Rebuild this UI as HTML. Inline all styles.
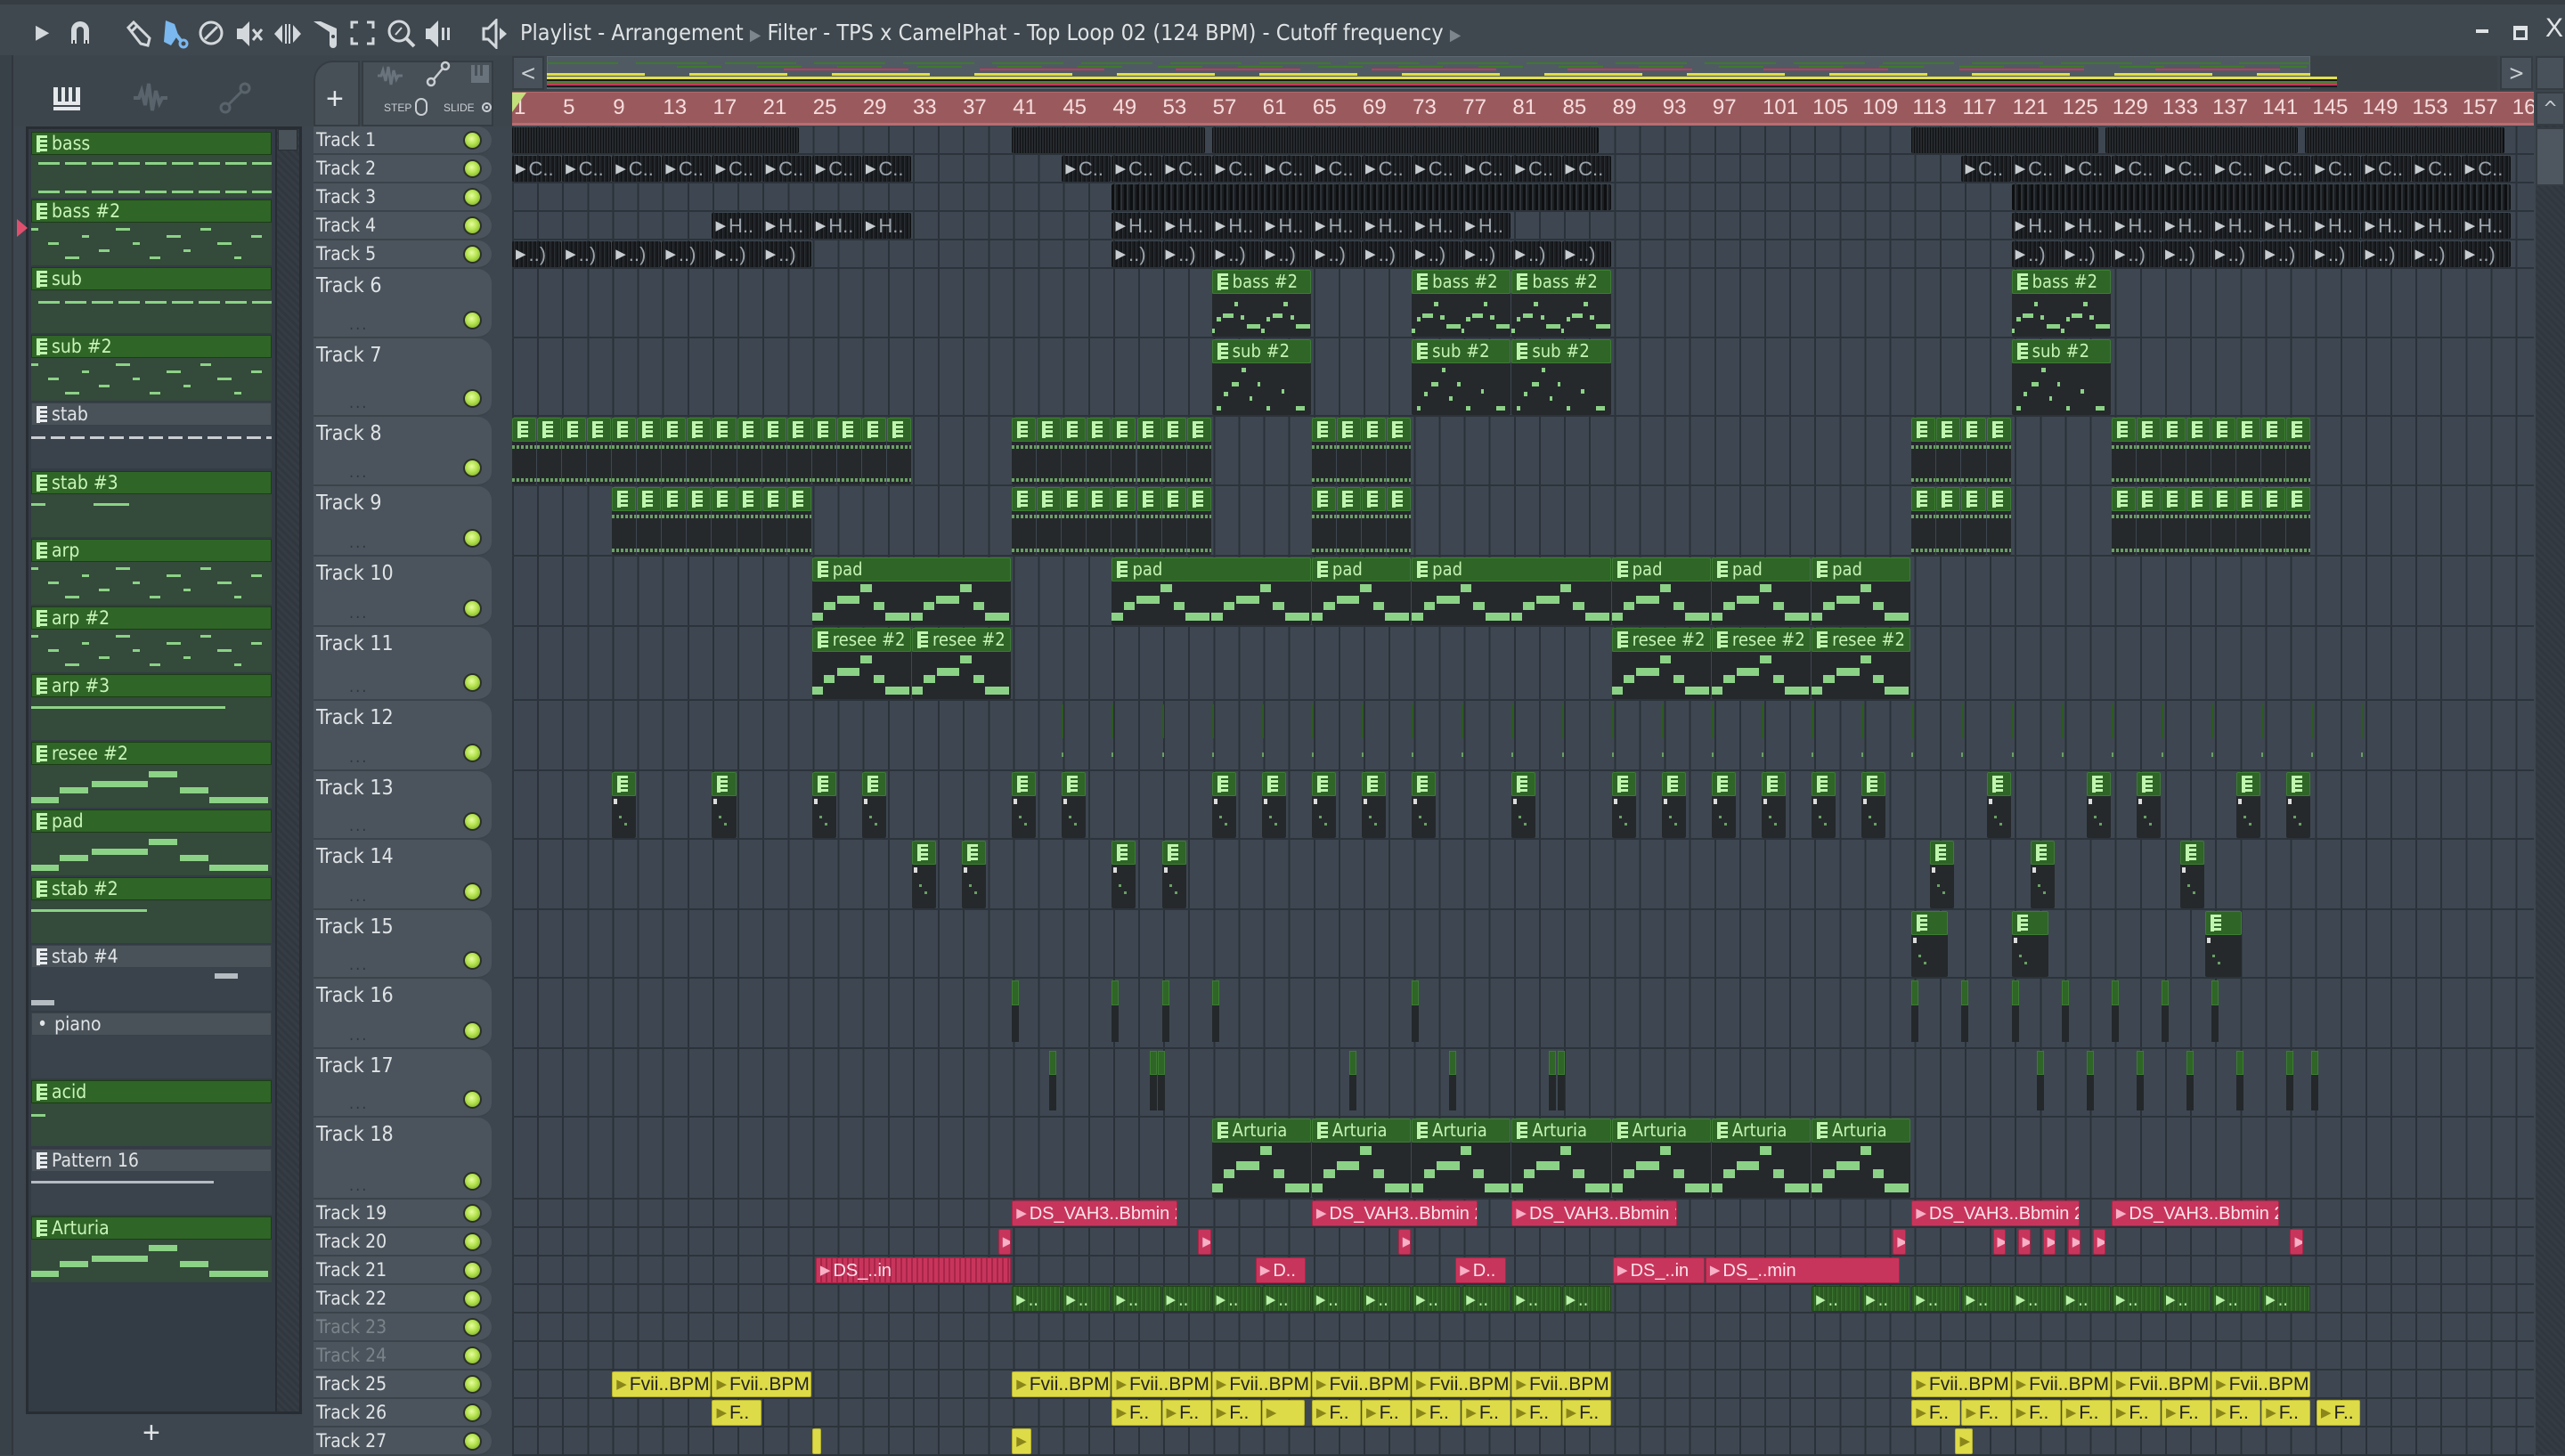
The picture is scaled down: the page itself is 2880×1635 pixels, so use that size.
<!DOCTYPE html>
<html><head><meta charset="utf-8">
<style>
*{box-sizing:border-box;margin:0;padding:0}
body{width:2880px;height:1634px;overflow:hidden;background:#3d464e;font-family:"DejaVu Sans Condensed","DejaVu Sans","Liberation Sans",sans-serif;position:relative}
.a{position:absolute}
#top{left:0;top:0;width:2880px;height:62px;background:#3f484e;border-top:5px solid #363d43}
.ico{position:absolute;top:14px;height:36px;color:#d3d8dc;font-size:30px;line-height:36px}
#title{left:584px;top:14px;font-size:25px;color:#dfe3e6;white-space:nowrap;line-height:36px}
#ruler{left:575px;top:103px;width:2270px;height:38px;background:#9a5a5d;border-bottom:3px solid #b86e72;border-top:1px solid #b06a6d;overflow:hidden}
#ruler span{position:absolute;top:3px;font-family:"Liberation Sans Narrow","Liberation Sans",sans-serif;font-size:24px;color:#f6dcdc}
#g{left:575px;top:142px;width:2270px;height:1492px;background-color:#3e4751;background-image:repeating-linear-gradient(90deg,#2a3138 0 2px,transparent 2px 28.12px)}
.row{position:absolute;left:0;width:2270px;border-bottom:2px solid #2c333a}
.th{position:absolute;left:352px;width:200px;background:#4b545c;border-radius:0 16px 16px 0;border-bottom:2px solid #3b434a;color:#dfe3e6}
.th b{position:absolute;left:3px;font-weight:normal;white-space:nowrap}
.led{position:absolute;left:168px;width:21px;height:21px;border-radius:50%;background:radial-gradient(circle at 45% 40%,#e6fca0 0,#b3e24d 45%,#6d9a23 100%);border:2px solid #2b3129}
.dots{position:absolute;left:40px;color:#2f363c;font-size:18px;letter-spacing:2px}
.c{position:absolute;overflow:hidden;white-space:nowrap;border-radius:2px}
.dk{background:#1c1f22;background-image:repeating-linear-gradient(90deg,#141619 0 2px,#2a2e33 2px 3px,#1c1f22 3px 5px);border-right:1px solid #0e1012;color:#9aa3ab;font-family:"Liberation Sans Narrow","Liberation Sans",sans-serif;font-size:22px;line-height:30px}
.wf1{background:#1a1c1f;background-image:repeating-linear-gradient(90deg,#0f1113 0 1px,#26292d 1px 3px)}
.wf3{background:#1b1e21;background-image:repeating-linear-gradient(90deg,#0d0f11 0 3px,#2d3237 3px 5px,#1b1e21 5px 7px)}
.ar{display:inline-block;color:#c7ccd0;font-size:15px;margin:0 3px 0 4px;vertical-align:top}
.ph{position:absolute;left:0;top:0;right:0;height:27px;background:#2f6527;border:1px solid #3c7d32;color:#c4f4b4;font-size:20px;line-height:25px;border-radius:2px}
.pb{position:absolute;left:0;top:27px;right:0;bottom:0;background:#25292c}
.pi{display:inline-block;width:12px;height:19px;margin:3px 5px 0 5px;vertical-align:top;background:repeating-linear-gradient(180deg,#bff5ae 0 3px,#2f6527 3px 5px);border-left:4px solid #bff5ae}
.n{position:absolute;height:9px;background:#8cd286}
.red{background:#c8355c;border:1px solid #a82548;color:#fbe3ea;font-family:"Liberation Sans Narrow","Liberation Sans",sans-serif;font-size:20px;line-height:28px}
.ga{background:#2d5e23;background-image:repeating-linear-gradient(90deg,#2a5820 0 2px,#3a7330 2px 3px,#2d5e23 3px 5px);border:1px solid #1f4318;color:#b9f2a9;font-size:20px;line-height:28px}
.yel{background:#dedb48;border:1px solid #b5b22e;color:#222;font-family:"Liberation Sans Narrow","Liberation Sans",sans-serif;font-size:21px;line-height:28px}
.yel .ar{color:#8a861a}
.red .ar{color:#f7b0c6}
.ga .ar{color:#b9f2a9}
.mk{position:absolute;width:8px;background:#24282b}
.mk i{position:absolute;left:0;top:0;width:8px;height:40%;background:#2f6527;border:1px solid #3c7d32}
#lp{left:29px;top:142px;width:310px;height:1446px;background:#333b45;border:3px solid #272d33}
.it{position:absolute;left:4px;width:270px;height:74px}
.ih{position:absolute;left:0;top:0;width:270px;height:26px;font-size:21px;line-height:25px;color:#c8f5b8;border:1px solid #1c3d16;background:#2f6527;white-space:nowrap}
.ib{position:absolute;left:0;top:26px;width:270px;height:48px;background:#344a3a}
.gr .ih{background:#4a5259;color:#e0e4e7;border-color:#3a4148}
.gr .ib{background:#3a424b}
.gr .pi{background:repeating-linear-gradient(180deg,#e8ecef 0 3px,#4a5259 3px 5px);border-left-color:#e8ecef}
</style></head><body>
<div class="a" style="left:0;top:0;width:15px;height:1634px;background:#394148;border-right:2px solid #30373d"></div>
<div id="top" class="a">
<div class="ico" style="left:40px;font-size:22px">▶</div>
<svg class="a" style="left:76px;top:16px" width="28" height="30" viewBox="0 0 28 30"><path d="M4 28V13a10 10 0 0 1 20 0v15h-6V13a4 4 0 0 0-8 0v15z" fill="#d3d8dc"/><rect x="6" y="24" width="2" height="4" fill="#333"/><rect x="20" y="24" width="2" height="4" fill="#333"/></svg>
<svg class="a" style="left:140px;top:16px" width="32" height="32" viewBox="0 0 32 32"><path d="M4 10l6-6 18 18-2 8-8-2z" fill="none" stroke="#d3d8dc" stroke-width="3"/><path d="M8 14l6-6" stroke="#d3d8dc" stroke-width="3"/></svg>
<svg class="a" style="left:180px;top:14px" width="34" height="36" viewBox="0 0 34 36"><path d="M6 4l10 4 4 12-8 12-8-4z" fill="#7ab8ef"/><circle cx="26" cy="30" r="4" fill="none" stroke="#7ab8ef" stroke-width="3"/><path d="M18 20l6 8" stroke="#7ab8ef" stroke-width="4"/></svg>
<svg class="a" style="left:222px;top:17px" width="30" height="30" viewBox="0 0 30 30"><circle cx="15" cy="15" r="12" fill="none" stroke="#d3d8dc" stroke-width="3"/><path d="M8 22L22 8" stroke="#d3d8dc" stroke-width="3"/></svg>
<svg class="a" style="left:264px;top:16px" width="34" height="34" viewBox="0 0 34 34"><path d="M2 11h6l8-8v28l-8-8H2z" fill="#d3d8dc"/><path d="M20 12l10 12M30 12L20 24" stroke="#d3d8dc" stroke-width="3"/></svg>
<svg class="a" style="left:306px;top:18px" width="34" height="30" viewBox="0 0 34 30"><path d="M2 15l9-10v20zM32 15l-9-10v20z" fill="#d3d8dc"/><rect x="14" y="4" width="2" height="22" fill="#d3d8dc"/><rect x="18" y="4" width="2" height="22" fill="#d3d8dc"/></svg>
<svg class="a" style="left:350px;top:16px" width="32" height="34" viewBox="0 0 32 34"><path d="M2 3l16 16M2 3h8l18 8v18a4 4 0 0 1-8 0V15z" fill="#d3d8dc"/><circle cx="24" cy="20" r="2" fill="#3f484e"/></svg>
<svg class="a" style="left:392px;top:17px" width="30" height="30" viewBox="0 0 30 30"><path d="M3 10V3h7M20 3h7v7M27 20v7h-7M10 27H3v-7" fill="none" stroke="#d3d8dc" stroke-width="3"/></svg>
<svg class="a" style="left:434px;top:16px" width="34" height="34" viewBox="0 0 34 34"><circle cx="14" cy="14" r="11" fill="none" stroke="#d3d8dc" stroke-width="3"/><path d="M22 22l9 9" stroke="#d3d8dc" stroke-width="4"/><path d="M10 18l7-8" stroke="#d3d8dc" stroke-width="2"/></svg>
<svg class="a" style="left:476px;top:16px" width="32" height="34" viewBox="0 0 32 34"><path d="M2 11h5l9-9v30l-9-9H2z" fill="#d3d8dc"/><rect x="20" y="10" width="3" height="14" fill="#d3d8dc"/><rect x="26" y="10" width="3" height="14" fill="#d3d8dc"/></svg>
<svg class="a" style="left:540px;top:16px" width="32" height="34" viewBox="0 0 32 34"><path d="M3 11h5l9-9v30l-9-9H3z" fill="none" stroke="#d3d8dc" stroke-width="3"/><path d="M21 10l8 7-8 7z" fill="#d3d8dc"/></svg>
<div id="title" class="a">Playlist - Arrangement <span style="color:#7d868d;font-size:18px">▶</span> Filter - TPS x CamelPhat - Top Loop 02 (124 BPM) - Cutoff frequency <span style="color:#7d868d;font-size:18px">▶</span></div>
<div class="a" style="left:2780px;top:28px;width:14px;height:4px;background:#dfe3e6"></div>
<div class="a" style="left:2822px;top:24px;width:16px;height:16px;border:3px solid #dfe3e6;border-top-width:5px"></div>
<div class="a" style="left:2858px;top:10px;font-size:30px;color:#dfe3e6;font-family:'Liberation Sans',sans-serif">X</div>
</div>
<div class="a" style="left:15px;top:62px;width:2865px;height:80px;background:#3d454c"></div>
<svg class="a" style="left:58px;top:96px" width="34" height="30" viewBox="0 0 34 30"><rect x="2" y="2" width="30" height="26" fill="#e4e8eb"/><rect x="7" y="2" width="4" height="16" fill="#3d454c"/><rect x="15" y="2" width="4" height="16" fill="#3d454c"/><rect x="23" y="2" width="4" height="16" fill="#3d454c"/><rect x="2" y="22" width="30" height="2" fill="#3d454c"/></svg>
<svg class="a" style="left:148px;top:92px" width="40" height="36" viewBox="0 0 40 36"><path d="M2 18h6l3-8 4 16 4-24 4 30 4-22 4 14 3-6h6" fill="none" stroke="#59636b" stroke-width="4"/></svg>
<svg class="a" style="left:246px;top:92px" width="36" height="36" viewBox="0 0 36 36"><circle cx="7" cy="29" r="5" fill="none" stroke="#59636b" stroke-width="3"/><circle cx="29" cy="7" r="5" fill="none" stroke="#59636b" stroke-width="3"/><path d="M11 25L25 11" stroke="#59636b" stroke-width="3"/></svg>
<div class="a" style="left:352px;top:68px;width:52px;height:74px;background:#474f57;border-radius:22px 0 0 0;border:2px solid #353c42"></div>
<div class="a" style="left:366px;top:92px;font-size:34px;color:#e3e7ea;font-family:'Liberation Sans',sans-serif">+</div>
<div class="a" style="left:406px;top:68px;width:148px;height:74px;background:#474f57;border:2px solid #353c42"></div>
<svg class="a" style="left:422px;top:72px" width="30" height="26" viewBox="0 0 30 26"><path d="M2 13h4l2-6 3 12 3-16 3 20 3-16 3 10 2-4h5" fill="none" stroke="#69737b" stroke-width="3"/></svg>
<svg class="a" style="left:478px;top:68px" width="28" height="30" viewBox="0 0 28 30"><circle cx="6" cy="24" r="4" fill="none" stroke="#c9ced2" stroke-width="2.5"/><circle cx="22" cy="6" r="4" fill="none" stroke="#c9ced2" stroke-width="2.5"/><path d="M9 21L19 9" stroke="#c9ced2" stroke-width="2.5"/></svg>
<svg class="a" style="left:528px;top:72px" width="22" height="22" viewBox="0 0 22 22"><rect x="1" y="1" width="20" height="20" fill="#69737b"/><rect x="5" y="1" width="3" height="12" fill="#474f57"/><rect x="11" y="1" width="3" height="12" fill="#474f57"/></svg>
<div class="a" style="left:431px;top:114px;font-size:12px;color:#c9ced2;font-family:'Liberation Sans Narrow','Liberation Sans',sans-serif">STEP</div>
<div class="a" style="left:466px;top:110px;width:14px;height:20px;border:2px solid #c9ced2;border-radius:7px"></div>
<div class="a" style="left:498px;top:114px;font-size:12px;color:#c9ced2;font-family:'Liberation Sans Narrow','Liberation Sans',sans-serif">SLIDE</div>
<div class="a" style="left:541px;top:115px;width:11px;height:11px;border:2px solid #c9ced2;border-radius:50%;background:radial-gradient(#c9ced2 30%,transparent 35%)"></div>
<div class="a" style="left:575px;top:63px;width:36px;height:38px;background:#48515a;border:2px solid #353c42;color:#c9ced2;font-size:24px;text-align:center;line-height:34px">&lt;</div>
<div class="a" style="left:2807px;top:63px;width:37px;height:38px;background:#48515a;border:2px solid #353c42;color:#c9ced2;font-size:24px;text-align:center;line-height:34px">&gt;</div>
<div class="a" style="left:2847px;top:63px;width:33px;height:38px;background:#48515a;border:2px solid #353c42"></div>
<div class="a" style="left:614px;top:63px;width:2190px;height:38px;background:#3a4248"></div>
<div class="a" style="left:614px;top:63px;width:1980px;height:37px;background:#505a63;border:1px solid #5d6770"></div>
<div class="a" style="left:614px;top:70px;width:1980px;height:2px;background:repeating-linear-gradient(90deg,#3d7a2d 0 80px,transparent 80px 100px)"></div>
<div class="a" style="left:760px;top:74px;width:1830px;height:2px;background:repeating-linear-gradient(90deg,#3d7a2d 0 50px,transparent 50px 90px)"></div>
<div class="a" style="left:880px;top:77px;width:1700px;height:2px;background:repeating-linear-gradient(90deg,#c9355c 0 140px,transparent 140px 220px)"></div>
<div class="a" style="left:614px;top:82px;width:1980px;height:3px;background:repeating-linear-gradient(90deg,#dede4a 0 110px,transparent 110px 160px)"></div>
<div class="a" style="left:614px;top:86px;width:2010px;height:3px;background:#e3e14a"></div>
<div class="a" style="left:614px;top:89px;width:2010px;height:2px;background:#1a1c1e"></div>
<div class="a" style="left:614px;top:91px;width:2010px;height:2px;background:#3f8a2f"></div>
<div class="a" style="left:614px;top:93px;width:2010px;height:3px;background:#c9355c"></div>
<div class="a" style="left:614px;top:96px;width:2010px;height:2px;background:#1a1c1e"></div>
<div id="ruler" class="a"></div>
<div class="a" style="left:575px;top:104px;width:0;height:0;border-left:16px solid #c2e07a;border-bottom:22px solid transparent"></div>
<div class="a" style="left:2847px;top:103px;width:33px;height:1531px;background:repeating-linear-gradient(45deg,#30373e 0 3px,#343b42 3px 6px)"></div>
<div class="a" style="left:2847px;top:103px;width:33px;height:38px;background:#48515a;border:2px solid #353c42;color:#c9ced2;font-size:22px;text-align:center;line-height:36px">^</div>
<div class="a" style="left:2847px;top:143px;width:33px;height:66px;background:#4e575f;border:2px solid #353c42"></div>
<div id="lp" class="a"></div>
<div class="a" style="left:309px;top:145px;width:27px;height:1440px;background:repeating-linear-gradient(45deg,#30373e 0 3px,#353c43 3px 6px);border-left:2px solid #272d33"></div>
<div class="a" style="left:312px;top:145px;width:22px;height:24px;background:#4a5259;border:1px solid #2a3036"></div>
<div class="a" style="left:160px;top:1590px;font-size:34px;color:#dfe3e6;font-family:'Liberation Sans',sans-serif">+</div>
<div id="g" class="a"></div>
<div id="th"></div>
<script>
const B=14.03;
const H=[32,32,32,32,32,78,88,78,79,79,83,79,77,79,77,79,77,92,32,32,32,32,32,32,32,32,32];
const T=[];let yy=0;for(const h of H){T.push(yy);yy+=h;}
const g=document.getElementById('g');let s='';
for(let i=0;i<H.length;i++) s+=`<div class="row" style="top:${T[i]}px;height:${H[i]}px"></div>`;
let th='';
for(let i=0;i<H.length;i++){const tall=H[i]>40;const dim=(i==22||i==23);
th+=`<div class="th" style="top:${142+T[i]}px;height:${H[i]}px"><b style="top:${tall?6:3}px;font-size:${tall?23:21}px;${dim?'color:#7b838a':''}">Track ${i+1}</b><div class="led" style="top:${tall?H[i]-31:5}px"></div>${tall?`<div class="dots" style="top:${H[i]-26}px">...</div>`:''}</div>`;}
document.getElementById('th').innerHTML=th;
let r='';for(let n=1;n<=161;n+=4){r+=`<span style="left:${(n-1)*B+(n==1?2:1)}px">${n}</span>`;}
document.getElementById('ruler').innerHTML=r;
function X(b){return (b-1)*B}
function box(t,b1,b2,cls,inner,extra){const x=X(b1),w=(b2-b1)*B-1,y=T[t-1]+1,h=H[t-1]-3;s+=`<div class="c ${cls}" style="left:${x}px;top:${y}px;width:${w}px;height:${h}px;${extra||''}">${inner||''}</div>`;}
function seq(t,b1,b2,len,cls,lab){for(let b=b1;b<b2-0.01;b+=len){box(t,b,Math.min(b+len,b2),cls,lab);}}
const A=t=>`<span class="ar">▶</span>${t}`;
[[1,24],[41,56.5],[57,88],[113,128],[128.5,144],[144.5,160.5]].forEach(a=>box(1,a[0],a[1],'dk wf1'));
seq(2,1,33,4,'dk',A('C..'));seq(2,45,89,4,'dk',A('C..'));seq(2,117,161,4,'dk',A('C..'));
box(3,49,89,'dk wf3');box(3,121,161,'dk wf3');
seq(4,17,33,4,'dk',A('H..'));seq(4,49,81,4,'dk',A('H..'));seq(4,121,161,4,'dk',A('H..'));
seq(5,1,25,4,'dk',A('..)'));seq(5,49,89,4,'dk',A('..)'));seq(5,121,161,4,'dk',A('..)'));
const PAD=[[0,.12,.88],[.12,.24,.58],[.25,.49,.4],[.49,.61,.08],[.62,.74,.58],[.74,.99,.88]];
const BASS=[[0,.08,.9],[.1,.2,.6],[.22,.45,.5],[.45,.55,.2],[.58,.68,.55],[.7,1,.8]];
const SUB=[[.05,.1,.9],[.12,.17,.6],[.2,.28,.4],[.3,.35,.1],[.38,.42,.7],[.46,.5,.4],[.55,.6,.9],[.7,.74,.55],[.85,.95,.9]];
function pat(t,b1,b2,lab,motif,rep,nh){const w=(b2-b1)*B-1;const bh=H[t-1]-3-27;let n='';
 for(let r=0;r<rep;r++){const o=r*w/rep,ww=w/rep;for(const m of motif){n+=`<div class="n" style="left:${o+m[0]*ww}px;width:${Math.max(3,(m[1]-m[0])*ww-1)}px;top:${m[2]*(bh-(nh||9))}px;height:${nh||9}px"></div>`;}}
 box(t,b1,b2,'',`<div class="ph"><i class="pi"></i>${lab}</div><div class="pb">${n}</div>`);}
[57,73,81,121].forEach(b=>pat(6,b,b+8,'bass #2',BASS,2,5));
[57,73,81,121].forEach(b=>pat(7,b,b+8,'sub #2',SUB,1,5));
function sp(t,b1,b2,len,dots){for(let b=b1;b<b2-0.01;b+=len){box(t,b,b+len,'',`<div class="ph" style="padding:0"><i class="pi" style="margin-left:5px"></i></div><div class="pb">${dots?'<div class="n" style="left:0;right:0;top:4px;height:4px;background:repeating-linear-gradient(90deg,#6aa064 0 3px,transparent 3px 5px)"></div><div class="n" style="left:0;right:0;bottom:3px;top:auto;height:4px;background:repeating-linear-gradient(90deg,#6aa064 0 3px,transparent 3px 5px)"></div>':'<div class="n" style="left:2px;top:3px;width:4px;height:6px;background:#ddd"></div><div class="n" style="left:8px;top:22px;width:3px;height:3px;background:#6aa064"></div><div class="n" style="left:14px;top:30px;width:3px;height:3px;background:#6aa064"></div>'}</div>`);}}
sp(8,1,33,2,1);sp(8,41,57,2,1);sp(8,65,73,2,1);sp(8,113,121,2,1);sp(8,129,145,2,1);
sp(9,9,25,2,1);sp(9,41,57,2,1);sp(9,65,73,2,1);sp(9,113,121,2,1);sp(9,129,145,2,1);
pat(10,25,41,'pad',PAD,2);
[[49,65],[65,73],[73,89],[89,97],[97,105],[105,113]].forEach(a=>pat(10,a[0],a[1],'pad',PAD,(a[1]-a[0])/8));
[25,33,89,97,105].forEach(b=>pat(11,b,b+8,'resee #2',PAD,1));
for(let b=45;b<=149;b+=4){s+=`<div class="a" style="left:${X(b)}px;top:${T[11]+4}px;width:2px;height:38px;background:#2c5a22"></div><div class="a" style="left:${X(b)}px;top:${T[11]+58}px;width:2px;height:5px;background:#6aa064"></div>`;}
[9,17,25,29,41,45,57,61,65,69,73,81,89,93,97,101,105,109,119,127,131,139,143].forEach(b=>sp(13,b,b+2,2,0));
[33,37,49,53,114.5,122.5,134.5].forEach(b=>sp(14,b,b+2,2,0));
[113,121,136.5].forEach(b=>sp(15,b,b+3,3,0));
function mk(t,b){s+=`<div class="mk" style="left:${X(b)}px;top:${T[t-1]+2}px;height:${H[t-1]-10}px"><i></i></div>`;}
[41,49,53,57,73,113,117,121,125,129,133,137].forEach(b=>mk(16,b));
[44,52,52.7,68,76,84,84.7,123,127,131,135,139,143,145].forEach(b=>mk(17,b));
[57,65,73,81,89,97,105].forEach(b=>pat(18,b,b+8,'Arturia',PAD,1,10));
[[41,54.3],[65,78.3],[81,94.3],[113,126.5],[129,142.5]].forEach(a=>box(19,a[0],a[1],'red',A('DS_VAH3..Bbmin 2')));
[39.9,55.9,71.9,111.5,119.5,121.5,123.5,125.5,127.5,143.3].forEach(b=>box(20,b,b+1.1,'red',A('')));
box(21,25.3,41,'red',A('DS_..in'),'background-image:repeating-linear-gradient(90deg,#c8355c 0 4px,#a82548 4px 6px)');
box(21,60.5,64.6,'red',A('D..'));box(21,76.5,80.6,'red',A('D..'));
box(21,89.1,96.5,'red',A('DS_..in'));box(21,96.5,112.1,'red',A('DS_..min'));
seq(22,41,89,4,'ga',A('..'));seq(22,105,145,4,'ga',A('..'));
box(25,9,17,'yel',A('Fvii..BPM'));box(25,17,25,'yel',A('Fvii..BPM'));
seq(25,41,89,8,'yel',A('Fvii..BPM'));seq(25,113,145,8,'yel',A('Fvii..BPM'));
box(26,17,21,'yel',A('F..'));seq(26,49,61,4,'yel',A('F..'));box(26,61,64.5,'yel',A(''));seq(26,65,89,4,'yel',A('F..'));
seq(26,113,145,4,'yel',A('F..'));box(26,145.4,149,'yel',A('F..'));
box(27,25,25.8,'yel','');box(27,41,42.6,'yel',A(''));box(27,116.5,118,'yel',A(''));
g.innerHTML=s;
const L=[['bass',1],['bass #2',1],['sub',1],['sub #2',1],['stab',0],['stab #3',1],['arp',1],['arp #2',1],['arp #3',1],['resee #2',1],['pad',1],['stab #2',1],['stab #4',0],['piano',2],['acid',1],['Pattern 16',0],['Arturia',1]];
let lp='';
L.forEach((it,i)=>{const y=148+i*76.1;let n='';
 if(it[0]=='pad'||it[0]=='resee #2'||it[0]=='Arturia'){for(const m of PAD)n+=`<div class="n" style="left:${m[0]*270}px;width:${(m[1]-m[0])*270-1}px;top:${4+m[2]*36}px;height:7px"></div>`;}
 else if(it[0]=='bass'||it[0]=='sub'){n=`<div class="n" style="left:8px;right:0;top:${it[0]=='bass'?8:12}px;height:3px;background:repeating-linear-gradient(90deg,#8cd286 0 24px,transparent 24px 30px)"></div>${it[0]=='bass'?'<div class="n" style="left:8px;right:0;top:40px;height:3px;background:repeating-linear-gradient(90deg,#8cd286 0 24px,transparent 24px 30px)"></div>':''}`;}
 else if(it[0]=='stab'){n=`<div class="n" style="left:0;right:0;top:12px;height:3px;background:repeating-linear-gradient(90deg,#c9ced2 0 16px,transparent 16px 22px)"></div>`;}
 else if(it[0]=='stab #4'){n=`<div class="n" style="left:206px;width:26px;top:6px;height:6px;background:#b5bcc2"></div><div class="n" style="left:0;width:26px;top:36px;height:6px;background:#b5bcc2"></div>`;}
 else if(it[0]=='Pattern 16'){n=`<div class="n" style="left:0;width:205px;top:10px;height:3px;background:#b5bcc2"></div>`;}
 else if(it[0]=='stab #2'||it[0]=='arp #3'){n=`<div class="n" style="left:0;width:${it[0]=='stab #2'?130:218}px;top:10px;height:3px"></div>`;}
 else if(it[0]=='stab #3'){n=`<div class="n" style="left:0;width:16px;top:10px;height:3px"></div><div class="n" style="left:70px;width:40px;top:10px;height:3px"></div>`;}
 else if(it[0]=='acid'){n=`<div class="n" style="left:0;width:16px;top:12px;height:3px"></div>`;}
 else if(it[0]!='piano'){for(let k=0;k<14;k++)n+=`<div class="n" style="left:${k*19}px;width:${8+(k%3)*4}px;top:${6+((k*7)%5)*8}px;height:3px"></div>`;}
 const gr=it[1]!=1;
 lp+=`<div class="it ${gr?'gr':''}" style="top:${y}px;left:35px"><div class="ih">${it[1]==2?'<span style="margin:0 8px 0 6px">•</span>':'<i class="pi"></i>'}${it[0]}</div><div class="ib">${n}</div></div>`;});
document.body.insertAdjacentHTML('beforeend',lp);
document.body.insertAdjacentHTML('beforeend','<div class="a" style="left:19px;top:246px;width:0;height:0;border-left:12px solid #e0506e;border-top:10px solid transparent;border-bottom:10px solid transparent"></div>');
</script>
</body></html>
